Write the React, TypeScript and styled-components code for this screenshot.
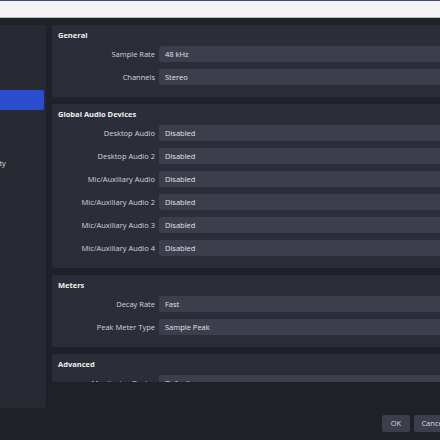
import React from 'react';
import styled, { createGlobalStyle } from 'styled-components';

const GlobalStyle = createGlobalStyle`
  html, body {
    margin: 0;
    padding: 0;
    background: #1f2129;
    overflow: hidden;
    font-family: "Open Sans", "DejaVu Sans", sans-serif;
  }
`

interface Row {
  label: string,
  value: string,
}

interface Group {
  title: string,
  rows: Row[],
}

const pages = ['General', 'Stream', 'Output', 'Audio', 'Video', 'Hotkeys', 'Accessibility', 'Advanced'];

const groups: Group[] = [
  {
    title: 'General',
    rows: [
      { label: 'Sample Rate', value: '48 kHz' },
      { label: 'Channels', value: 'Stereo' },
    ],
  },
  {
    title: 'Global Audio Devices',
    rows: [
      { label: 'Desktop Audio', value: 'Disabled' },
      { label: 'Desktop Audio 2', value: 'Disabled' },
      { label: 'Mic/Auxiliary Audio', value: 'Disabled' },
      { label: 'Mic/Auxiliary Audio 2', value: 'Disabled' },
      { label: 'Mic/Auxiliary Audio 3', value: 'Disabled' },
      { label: 'Mic/Auxiliary Audio 4', value: 'Disabled' },
    ],
  },
  {
    title: 'Meters',
    rows: [
      { label: 'Decay Rate', value: 'Fast' },
      { label: 'Peak Meter Type', value: 'Sample Peak' },
    ],
  },
  {
    title: 'Advanced',
    rows: [
      { label: 'Monitoring Device', value: 'Default' },
    ],
  },
];

const TopStrip = styled.div`
  height: 16px;
  background: #f3f3f4;
  border-top: 1px solid #3b4b6c;
  border-bottom: 1px solid #b9babd;
`

const Window = styled.div`
  width: 562px;
  margin-left: -62px;
  display: flex;
  flex-direction: column;
`

const Main = styled.div`
  display: flex;
  align-items: flex-start;
  gap: 6px;
  padding-top: 7px;
`

const Sidebar = styled.div`
  width: 108px;
  height: 383px;
  box-sizing: border-box;
  padding: 2px 2px 0 0;
  background: #272a33;
  border-radius: 0 3px 3px 0;
  display: flex;
  flex-direction: column;
  gap: 1px;
`

const PageItem = styled.div<{ $active?: boolean }>`
  height: 20px;
  line-height: 20px;
  padding-left: 26px;
  font-size: 7.5px;
  color: #dadade;
  white-space: nowrap;
  border-radius: 0 2px 2px 0;
  background: ${p => p.$active ? '#2b4ccc' : 'transparent'};
`

const ScrollArea = styled.div`
  flex: 1;
  height: 357px;
  overflow: hidden;
  display: flex;
  flex-direction: column;
  gap: 7px;
`

const GroupBox = styled.div`
  background: #2b2e38;
  border-radius: 3px;
  padding: 4px 6px 12px 6px;
  flex-shrink: 0;
`

const GroupTitle = styled.div`
  font-size: 7.5px;
  font-weight: 700;
  line-height: 12px;
  color: #f0f0f2;
  margin-bottom: 5px;
`

const Rows = styled.div`
  display: flex;
  flex-direction: column;
  gap: 7px;
`

const FormRow = styled.div`
  display: grid;
  grid-template-columns: 97px 1fr;
  column-gap: 4px;
  align-items: center;
`

const Label = styled.div`
  text-align: right;
  font-size: 7.5px;
  color: #d4d4d8;
  white-space: nowrap;
`

const Field = styled.div`
  height: 16px;
  line-height: 16px;
  background: #3c3f4b;
  border-radius: 2px;
  padding-left: 6px;
  font-size: 7.5px;
  color: #e2e2e6;
`

const ButtonRow = styled.div`
  display: flex;
  justify-content: flex-end;
  gap: 4px;
  margin-top: 7px;
  padding-right: 6px;
`

const Button = styled.div<{ $w: number }>`
  width: ${p => p.$w}px;
  height: 17px;
  line-height: 17px;
  text-align: center;
  background: #3c3f4b;
  border-radius: 2px;
  font-size: 7.5px;
  color: #d8d8dc;
`

function App() {
  return (
    <>
      <GlobalStyle />
      <TopStrip />
      <Window>
        <Main>
          <Sidebar>
            {pages.map(page => (
              <PageItem key={page} $active={page === 'Audio'}>{page}</PageItem>
            ))}
          </Sidebar>
          <ScrollArea>
            {groups.map(group => (
              <GroupBox key={group.title}>
                <GroupTitle>{group.title}</GroupTitle>
                <Rows>
                  {group.rows.map(row => (
                    <FormRow key={row.label}>
                      <Label>{row.label}</Label>
                      <Field>{row.value}</Field>
                    </FormRow>
                  ))}
                </Rows>
              </GroupBox>
            ))}
          </ScrollArea>
        </Main>
        <ButtonRow>
          <Button $w={28}>OK</Button>
          <Button $w={38}>Cancel</Button>
          <Button $w={38}>Apply</Button>
        </ButtonRow>
      </Window>
    </>
  );
}

export default App;
